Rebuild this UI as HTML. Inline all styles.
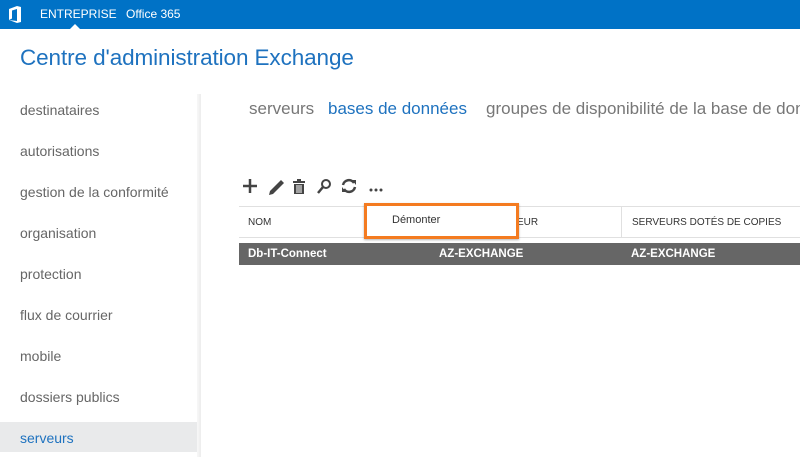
<!DOCTYPE html>
<html><head><meta charset="utf-8"><style>
*{margin:0;padding:0;box-sizing:border-box}
body{width:800px;height:457px;overflow:hidden;background:#fff;font-family:"Liberation Sans",sans-serif;position:relative}
.top{position:absolute;left:0;top:0;width:800px;height:29px;background:#0072c6;color:#fff;font-size:12px}
.top span{position:absolute;top:7px}
.title{position:absolute;left:20px;top:45px;font-size:22.5px;color:#1e72bf;letter-spacing:-0.1px}
.nav div{position:absolute;left:20px;font-size:14px;color:#666;white-space:nowrap}
.sel{position:absolute;left:0;top:422px;width:199px;height:30px;background:#e9eaeb}
.vline{position:absolute;left:197px;top:94px;width:4px;height:363px;background:linear-gradient(to right,#f8f8f8,#ececec)}
.tabs{position:absolute;top:99px;font-size:17px;white-space:nowrap}
.hdr{position:absolute;left:239px;top:206px;width:561px;height:32px;border-top:1px solid #e0e0e0;border-bottom:1px solid #e0e0e0;font-size:10px;color:#333}
.hdr span{position:absolute;top:10px}
.row{position:absolute;left:239px;top:243px;width:561px;height:22px;background:#666;color:#fff;font-size:11.5px;font-weight:bold}
.row span{position:absolute;top:5px}
.menu{position:absolute;left:364px;top:203px;width:155px;height:36px;border:3px solid #f47b20;background:#fff;font-size:11px;color:#333;box-shadow:0 1px 2px rgba(0,0,0,.3)}
</style></head><body>
<div class="top">
<svg style="position:absolute;left:8px;top:6px" width="14" height="17" viewBox="0 0 14 17"><path d="M1 3 L9 0 L13 1 L13 16 L9 17 L1 14 L9 15 L9 3 L4 4.5 L4 12.5 L1 14Z" fill="#fff"/></svg>
<span style="left:40px">ENTREPRISE</span><span style="left:126px">Office 365</span>
<svg style="position:absolute;left:70px;top:24px" width="10" height="5"><path d="M0 5 L5 0 L10 5Z" fill="#fff"/></svg>
</div>
<div class="title">Centre d'administration Exchange</div>
<div class="sel"></div>
<div class="vline"></div>
<div class="nav">
<div style="top:102px">destinataires</div>
<div style="top:143px">autorisations</div>
<div style="top:184px">gestion de la conformité</div>
<div style="top:225px">organisation</div>
<div style="top:266px">protection</div>
<div style="top:307px">flux de courrier</div>
<div style="top:348px">mobile</div>
<div style="top:389px">dossiers publics</div>
<div style="top:430px;color:#1e72bf">serveurs</div>
</div>
<div class="tabs" style="left:249px;color:#777">serveurs</div>
<div class="tabs" style="left:328px;color:#1e72bf">bases de données</div>
<div class="tabs" style="left:486px;color:#777">groupes de disponibilité de la base de don</div>
<svg style="position:absolute;left:242px;top:177px" width="150" height="18" viewBox="0 0 150 18">
<path d="M8 2v14M1 9h14" stroke="#444" stroke-width="2.5"/>
<path d="M28 14 L39 3 L42 6 L31 17 L27 18Z" fill="#444"/>
<g fill="#444"><rect x="51" y="4" width="12" height="2"/><rect x="55" y="2" width="4" height="2"/><rect x="52" y="7" width="10" height="10"/></g>
<g stroke="#fff" stroke-width="1"><path d="M55 8v8M57 8v8M59 8v8"/></g>
<circle cx="84" cy="7" r="4" fill="none" stroke="#444" stroke-width="2"/><path d="M81 10 L76 16" stroke="#444" stroke-width="2.5"/>
<path d="M101 8a6 6 0 0 1 11-2M113 10a6 6 0 0 1-11 2" fill="none" stroke="#444" stroke-width="2.5"/><path d="M110 3l4 0 0 5Z M104 15l-4 0 0-5Z" fill="#444"/>
<g fill="#444"><circle cx="129" cy="13" r="1.5"/><circle cx="134" cy="13" r="1.5"/><circle cx="139" cy="13" r="1.5"/></g>
</svg>
<div class="hdr"><span style="left:9px">NOM</span><span style="left:278px">EUR</span>
<div style="position:absolute;left:382px;top:0;width:1px;height:31px;background:#e0e0e0"></div>
<span style="left:393px">SERVEURS DOTÉS DE COPIES</span></div>
<div class="row"><span style="left:9px">Db-IT-Connect</span><span style="left:200px">AZ-EXCHANGE</span><span style="left:392px">AZ-EXCHANGE</span></div>
<div class="menu"><span style="position:absolute;left:25px;top:8px">Démonter</span></div>
</body></html>
